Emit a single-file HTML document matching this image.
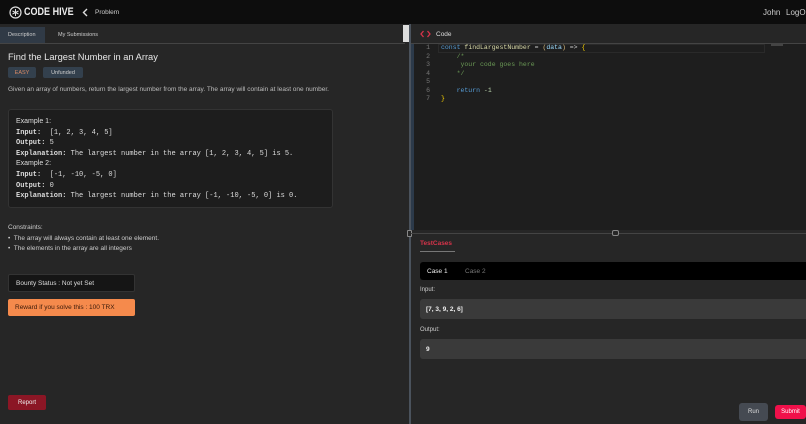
<!DOCTYPE html>
<html><head><style>
*{margin:0;padding:0;box-sizing:border-box}
body{width:806px;height:424px;overflow:hidden;background:#262626;font-family:"Liberation Sans",sans-serif;color:#ddd;position:relative}
.a{position:absolute}
.mono{font-family:"Liberation Mono",monospace}
.c{display:flex;align-items:center}
</style></head><body>
<div class="a" style="left:0;top:0;width:806px;height:24px;background:#0d0d0d"></div>
<svg class="a" style="left:9px;top:6px" width="13" height="13" viewBox="0 0 13 13"><circle cx="6.5" cy="6.5" r="5.5" fill="none" stroke="#ddd" stroke-width="1.2"/><path d="M6.5 3v7M3.5 5l6 3M9.5 5l-6 3" stroke="#ddd" stroke-width="1"/></svg>
<div class="a" style="left:24px;top:6px;font-size:11px;font-weight:bold;color:#eee;transform:scaleX(0.82);transform-origin:left">CODE HIVE</div>
<svg class="a" style="left:82px;top:8px" width="6" height="9" viewBox="0 0 6 9"><path d="M5 1L1.5 4.5 5 8" fill="none" stroke="#ddd" stroke-width="1.4"/></svg>
<div class="a" style="left:95px;top:9px;font-size:6.5px;color:#ccc">Problem</div>
<div class="a" style="left:763px;top:8px;font-size:8px;color:#ccc">John</div>
<div class="a" style="left:786px;top:8px;font-size:8px;color:#ccc;white-space:nowrap">LogOut</div>

<div class="a c" style="left:0;top:27px;width:45px;height:16px;background:#303a46;font-size:5.5px;color:#ccc;padding-left:8px">Description</div>
<div class="a" style="left:58px;top:32px;font-size:5.5px;color:#ccc">My Submissions</div>
<div class="a" style="left:0;top:43px;width:405px;height:1px;background:#444"></div>
<div class="a" style="left:403px;top:25px;width:6px;height:17px;background:#ddd"></div>

<div class="a" style="left:8px;top:52px;font-size:9.3px;color:#e6e6e6">Find the Largest Number in an Array</div>
<div class="a c" style="left:8px;top:67px;width:28px;height:11px;background:#33404d;border-radius:2px;font-size:5.5px;color:#d88a66;justify-content:center">EASY</div>
<div class="a c" style="left:43px;top:67px;width:40px;height:11px;background:#33404d;border-radius:2px;font-size:5.5px;color:#ccc;justify-content:center">Unfunded</div>
<div class="a" style="left:8px;top:86px;font-size:6.5px;color:#bbb;white-space:nowrap">Given an array of numbers, return the largest number from the array. The array will contain at least one number.</div>

<div class="a" style="left:8px;top:109px;width:325px;height:99px;background:#1d1d1d;border:1px solid #333;border-radius:3px"></div>
<div class="a" style="left:16px;top:117px;font-size:7px;line-height:10.6px;color:#ddd">
<div>Example 1:</div>
<div class="mono" style="white-space:pre"><b>Input:</b>  [1, 2, 3, 4, 5]</div>
<div class="mono"><b>Output:</b> 5</div>
<div class="mono" style="white-space:pre"><b>Explanation:</b> The largest number in the array [1, 2, 3, 4, 5] is 5.</div>
<div>Example 2:</div>
<div class="mono" style="white-space:pre"><b>Input:</b>  [-1, -10, -5, 0]</div>
<div class="mono"><b>Output:</b> 0</div>
<div class="mono" style="white-space:pre"><b>Explanation:</b> The largest number in the array [-1, -10, -5, 0] is 0.</div>
</div>

<div class="a" style="left:8px;top:223px;font-size:6.5px;color:#ccc;line-height:10.5px">
<div>Constraints:</div>
<div>&#8226;&nbsp; The array will always contain at least one element.</div>
<div>&#8226;&nbsp; The elements in the array are all integers</div>
</div>

<div class="a c" style="left:8px;top:274px;width:127px;height:18px;background:#151515;border:1px solid #333;border-radius:2px;font-size:6.5px;color:#ddd;padding-left:7px">Bounty Status : Not yet Set</div>
<div class="a c" style="left:8px;top:299px;width:127px;height:17px;background:#f58a4c;border-radius:2px;font-size:6.5px;color:#3a1a0a;padding-left:7px">Reward if you solve this : 100 TRX</div>
<div class="a c" style="left:8px;top:395px;width:38px;height:15px;background:#8b1625;border-radius:2px;font-size:6px;color:#eee;justify-content:center">Report</div>

<div class="a" style="left:409px;top:24px;width:2px;height:400px;background:#4a525c"></div>
<div class="a" style="left:407px;top:230px;width:5px;height:7px;border:1px solid #888;border-radius:1px;background:#262626"></div>

<div class="a" style="left:411px;top:24px;width:395px;height:20px;background:#262626;border-bottom:1px solid #444"></div>
<svg class="a" style="left:420px;top:30px" width="11" height="8" viewBox="0 0 11 8"><path d="M3.5 1L1 4l2.5 3M7.5 1L10 4 7.5 7" fill="none" stroke="#d6334a" stroke-width="1.3"/></svg>
<div class="a" style="left:436px;top:31px;font-size:6.5px;color:#ddd">Code</div>
<div class="a" style="left:411px;top:44px;width:395px;height:186px;background:#1e1e1e"></div>
<div class="a" style="left:411px;top:44px;width:3px;height:186px;background:#2c3a4a"></div>
<div class="a mono" style="left:422px;top:44px;font-size:6.5px;line-height:8.5px;color:#777;text-align:right;width:8px">1<br>2<br>3<br>4<br>5<br>6<br>7</div>
<div class="a" style="left:438px;top:44px;width:327px;height:9px;border:1px solid #2a2a2a"></div>
<div class="a mono" style="left:441px;top:44px;font-size:6.5px;line-height:8.5px;white-space:pre;color:#ccc"><span style="color:#569cd6">const</span> <span style="color:#dcdcaa">findLargestNumber</span> = <span style="color:#d7ba7d">(</span><span style="color:#9cdcfe">data</span><span style="color:#d7ba7d">)</span> =&gt; <span style="color:#ffd700">{</span>
<span style="color:#6a9955">    /*
     your code goes here
    */</span>

    <span style="color:#569cd6">return</span> <span style="color:#b5cea8">-1</span>
<span style="color:#ffd700">}</span></div>
<div class="a" style="left:771px;top:44px;width:12px;height:2px;background:#444"></div>

<div class="a" style="left:411px;top:233px;width:395px;height:1px;background:#444"></div>
<div class="a" style="left:612px;top:230px;width:7px;height:6px;border:1px solid #888;border-radius:2px;background:#262626"></div>
<div class="a" style="left:420px;top:240px;font-size:6.5px;color:#d6334a;font-weight:bold">TestCases</div>
<div class="a" style="left:420px;top:251px;width:35px;height:1px;background:#777"></div>
<div class="a" style="left:420px;top:262px;width:386px;height:18px;background:#000;border-radius:3px 0 0 3px"></div>
<div class="a" style="left:427px;top:268px;font-size:6.5px;color:#eee">Case 1</div>
<div class="a" style="left:465px;top:268px;font-size:6.5px;color:#777">Case 2</div>
<div class="a" style="left:420px;top:287px;font-size:6px;color:#ccc">Input:</div>
<div class="a c" style="left:420px;top:299px;width:386px;height:20px;background:#3a3a3a;border-radius:3px 0 0 3px;font-size:6.5px;color:#eee;padding-left:6px;font-weight:bold">[7, 3, 9, 2, 6]</div>
<div class="a" style="left:420px;top:327px;font-size:6px;color:#ccc">Output:</div>
<div class="a c" style="left:420px;top:339px;width:386px;height:20px;background:#3a3a3a;border-radius:3px 0 0 3px;font-size:6.5px;color:#eee;padding-left:6px;font-weight:bold">9</div>
<div class="a c" style="left:739px;top:403px;width:29px;height:18px;background:#454a52;border-radius:3px;font-size:6px;color:#ddd;justify-content:center">Run</div>
<div class="a c" style="left:775px;top:405px;width:31px;height:14px;background:#f0104a;border-radius:3px;font-size:6px;color:#fff;justify-content:center">Submit</div>
</body></html>
